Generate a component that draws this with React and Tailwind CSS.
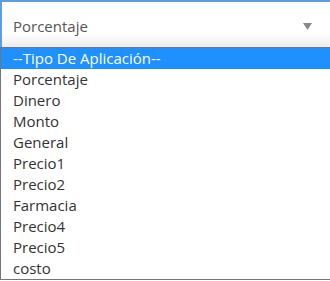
import React from 'react';

const options = [
  '--Tipo De Aplicación--',
  'Porcentaje',
  'Dinero',
  'Monto',
  'General',
  'Precio1',
  'Precio2',
  'Farmacia',
  'Precio4',
  'Precio5',
  'costo',
];

export default function App() {
  return (
    <div className="w-[330px] h-[281px] overflow-hidden bg-white" style={{ fontFamily: '"Open Sans", sans-serif' }}>
      <div className="w-[334px]">
        {/* Selected value */}
        <div className="h-[47px] flex items-center justify-between pt-[3px] pl-[11px] pr-[22px] border-t-2 border-l-2 border-[#5b9ee6] bg-gradient-to-b from-white from-70% to-[#ececec]">
          <span className="text-[15px] text-[#555]">Porcentaje</span>
          <svg width="9" height="7" viewBox="0 0 9 7">
            <path d="M0 0h9L4.5 7z" fill="#888" />
          </svg>
        </div>

        {/* Options list */}
        <ul className="border border-[#767676]">
          {options.map((opt, i) => (
            <li
              key={opt}
              className={`h-[21px] leading-[21px] pl-[12px] text-[15px] ${i === 0 ? 'bg-[#1e90ff] text-white' : 'text-[#333]'}`}
            >
              {opt}
            </li>
          ))}
        </ul>
      </div>
    </div>
  );
}
